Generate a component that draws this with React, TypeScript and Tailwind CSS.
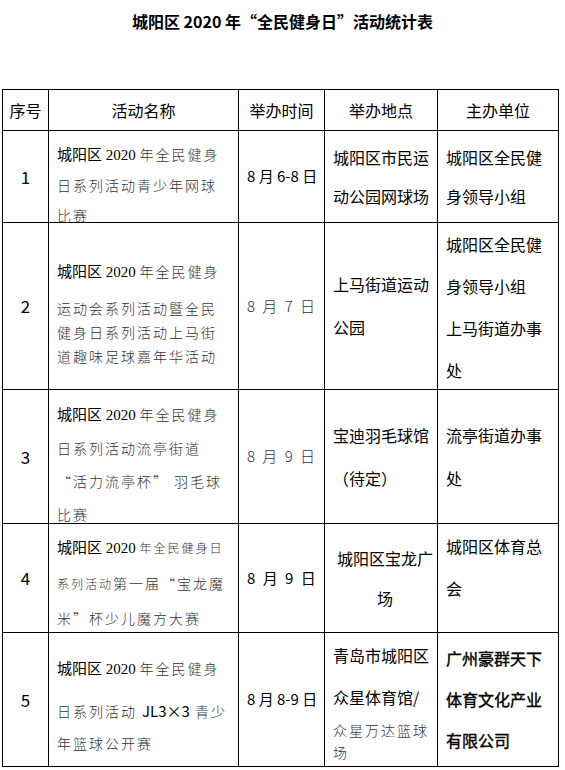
import { ReactNode } from "react";

const widths = ["w-[46px]", "w-[190px]", "w-[86px]", "w-[113px]", "w-[121px]"];

const thin = "text-[14px] tracking-[2px] font-light text-[#333]";
const serif = "font-['Liberation_Serif',serif]";

function Lead() {
  return (
    <>
      <span className="text-[15px]">城阳区</span>
      <span className={`text-[15px] ${serif}`}> 2020 </span>
    </>
  );
}

function Row({ h, cells }: { h: string; cells: ReactNode[] }) {
  return (
    <div className={`flex ${h}`}>
      {cells.map((c, i) => (
        <div key={i} className={`${widths[i]} shrink-0 border-r border-b border-black flex flex-col`}>
          {c}
        </div>
      ))}
    </div>
  );
}

function Num({ n }: { n: number }) {
  return <div className="flex-1 flex items-center justify-center text-[17px]">{n}</div>;
}

function Date({ children }: { children: ReactNode }) {
  return <div className="flex-1 flex items-center pl-2 text-[15px] whitespace-nowrap">{children}</div>;
}

function Centered({ lead, lines, className = "" }: { lead: string; lines: ReactNode[]; className?: string }) {
  return (
    <div className={`flex-1 flex flex-col justify-center pl-2 text-[16px] whitespace-nowrap ${lead} ${className}`}>
      {lines.map((l, i) => (
        <div key={i}>{l}</div>
      ))}
    </div>
  );
}

export default function App() {
  const header = ["序号", "活动名称", "举办时间", "举办地点", "主办单位"].map((t) => (
    <div key={t} className="flex-1 flex items-center justify-center text-[16px]">
      {t}
    </div>
  ));

  return (
    <div className="w-[565px] h-[770px] bg-white text-black font-['Noto_Sans_CJK_SC',sans-serif]">
      <h1 className="h-[89px] pt-[9px] text-center text-[16px] leading-[24px] font-bold">
        城阳区 2020 年“全民健身日”活动统计表
      </h1>

      <div className="ml-[2px] w-[557px] border-l border-t border-black">
        <Row h="h-[41px]" cells={header} />

        <Row
          h="h-[92px]"
          cells={[
            <Num n={1} />,
            <div className="pl-2 pt-[7px] leading-[30px] whitespace-nowrap">
              <div>
                <Lead />
                <span className={thin}>年全民健身</span>
              </div>
              <div className={thin}>日系列活动青少年网球</div>
              <div className={thin}>比赛</div>
            </div>,
            <Date>8 月 6-8 日</Date>,
            <Centered lead="leading-[39px]" lines={["城阳区市民运", "动公园网球场"]} />,
            <Centered lead="leading-[39px]" lines={["城阳区全民健", "身领导小组"]} />,
          ]}
        />

        <Row
          h="h-[167px]"
          cells={[
            <Num n={2} />,
            <div className="pl-2 pt-[23px] whitespace-nowrap">
              <div className="leading-[48px]">
                <Lead />
                <span className={thin}>年全民健身</span>
              </div>
              <div className={`${thin} leading-[24px]`}>运动会系列活动暨全民</div>
              <div className={`${thin} leading-[24px]`}>健身日系列活动上马街</div>
              <div className={`${thin} leading-[24px]`}>道趣味足球嘉年华活动</div>
            </div>,
            <Date>
              <span className="tracking-[2px] font-light text-[#333]">8 月 7 日</span>
            </Date>,
            <Centered lead="leading-[43px]" lines={["上马街道运动", "公园"]} />,
            <Centered lead="leading-[42px]" lines={["城阳区全民健", "身领导小组", "上马街道办事", "处"]} />,
          ]}
        />

        <Row
          h="h-[134px]"
          cells={[
            <Num n={3} />,
            <div className="pl-2 pt-[7px] leading-[33px] whitespace-nowrap">
              <div>
                <Lead />
                <span className={thin}>年全民健身</span>
              </div>
              <div className={thin}>日系列活动流亭街道</div>
              <div className={thin}>“活力流亭杯” 羽毛球</div>
              <div className={thin}>比赛</div>
            </div>,
            <Date>
              <span className="tracking-[2px] font-light text-[#333]">8 月 9 日</span>
            </Date>,
            <Centered lead="leading-[43px]" lines={["宝迪羽毛球馆", "（待定）"]} />,
            <Centered lead="leading-[43px]" lines={["流亭街道办事", "处"]} />,
          ]}
        />

        <Row
          h="h-[109px]"
          cells={[
            <Num n={4} />,
            <div className="pl-2 pt-[5px] leading-[34px] whitespace-nowrap">
              <div>
                <Lead />
                <span className="text-[12px] tracking-[2px] font-light text-[#333]">年全民健身日</span>
              </div>
              <div>
                <span className="text-[12px] tracking-[2px] font-light text-[#333]">系列活动</span>
                <span className={thin}>第一届“宝龙魔</span>
              </div>
              <div className={thin}>米”杯少儿魔方大赛</div>
            </div>,
            <Date>
              <span className="tracking-[2px]">8 月 9 日</span>
            </Date>,
            <Centered lead="leading-[40px]" className="items-center pl-0" lines={["城阳区宝龙广", "场"]} />,
            <div className="pl-2 pt-[1px] text-[16px] leading-[42px]">
              <div>城阳区体育总</div>
              <div>会</div>
            </div>,
          ]}
        />

        <Row
          h="h-[134px]"
          cells={[
            <Num n={5} />,
            <div className="pl-2 pt-[9px] whitespace-nowrap">
              <div className="leading-[50px]">
                <Lead />
                <span className={thin}>年全民健身</span>
              </div>
              <div className="leading-[32px]">
                <span className={thin}>日系列活动 </span>
                <span className="text-[15px]">JL3×3</span>
                <span className={thin}> 青少</span>
              </div>
              <div className={`${thin} leading-[32px]`}>年篮球公开赛</div>
            </div>,
            <Date>8 月 8-9 日</Date>,
            <div className="pl-2 pt-[1px] text-[16px] whitespace-nowrap">
              <div className="leading-[42px]">青岛市城阳区</div>
              <div className="leading-[42px]">众星体育馆/</div>
              <div className={`${thin} leading-[24px]`}>众星万达篮球</div>
              <div className={`${thin} leading-[20px]`}>场</div>
            </div>,
            <Centered
              lead="leading-[41px]"
              className="[-webkit-text-stroke:0.4px_black]"
              lines={["广州豪群天下", "体育文化产业", "有限公司"]}
            />,
          ]}
        />
      </div>
    </div>
  );
}
